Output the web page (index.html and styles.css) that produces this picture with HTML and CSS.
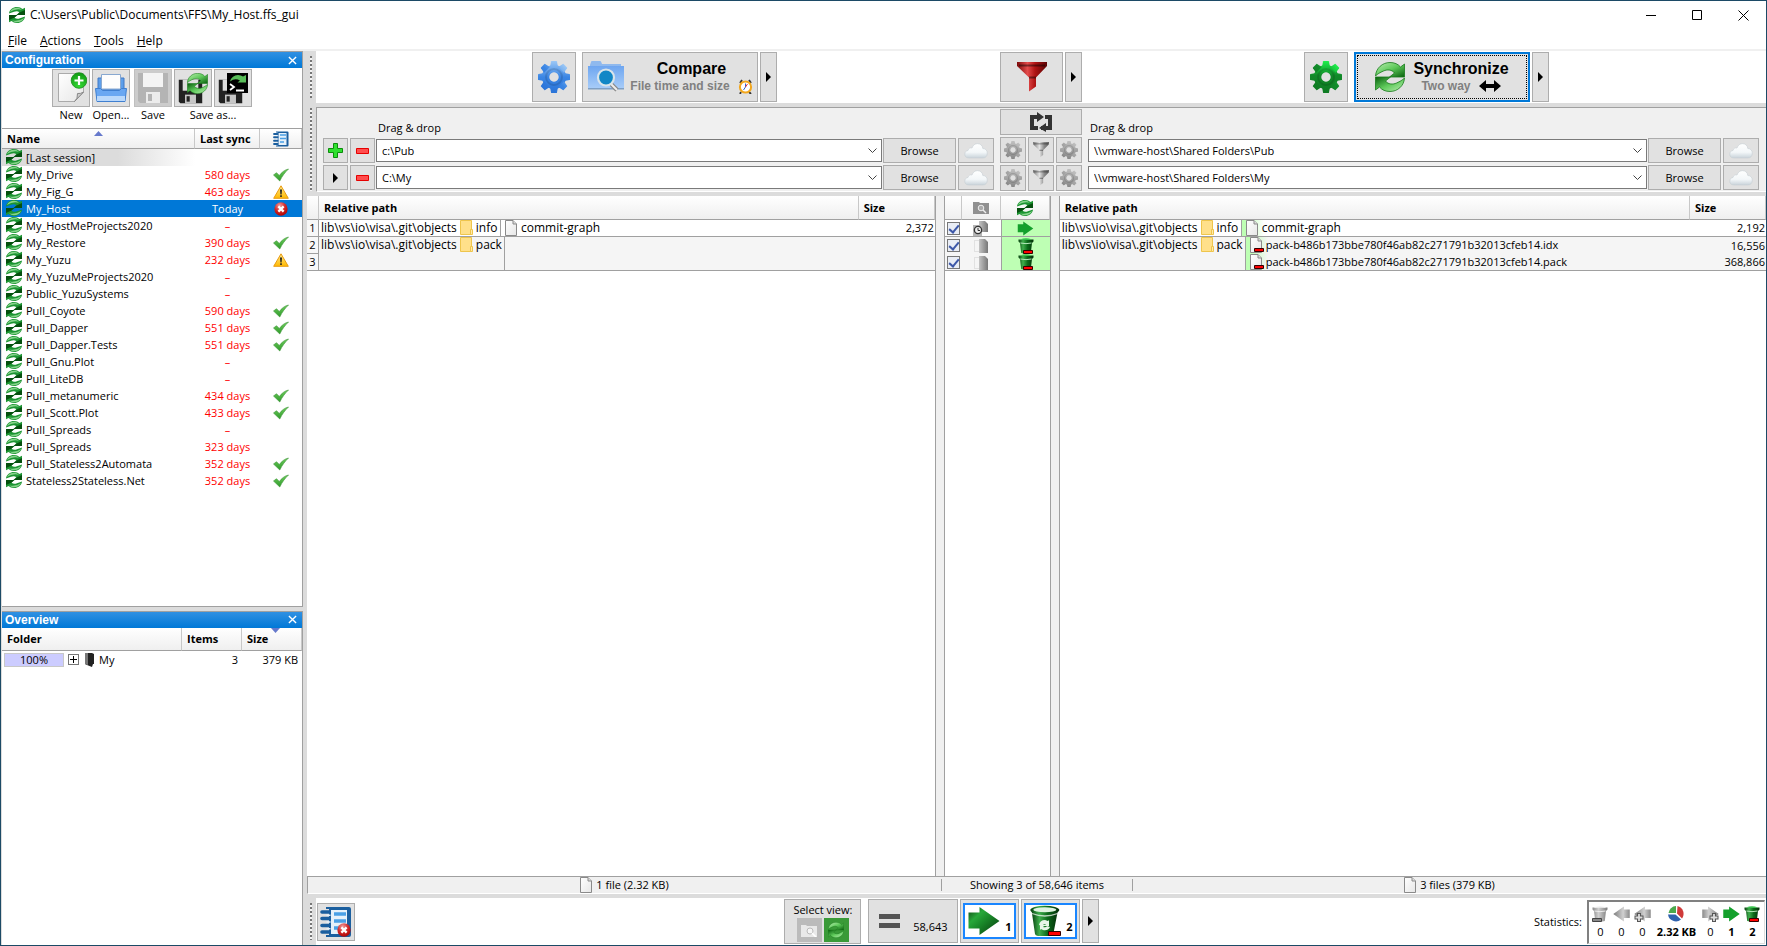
FILE: index.html
```html
<!DOCTYPE html>
<html lang="en">
<head>
<meta charset="utf-8">
<title>C:\Users\Public\Documents\FFS\My_Host.ffs_gui</title>
<link rel="stylesheet" href="styles.css">
</head>
<body>
<svg class="defs" aria-hidden="true">
  <defs>
    <linearGradient id="gGreen" gradientUnits="userSpaceOnUse" x1="0" y1="0" x2="0" y2="32"><stop offset="0" stop-color="#1ff04c"/><stop offset=".45" stop-color="#128a2a"/><stop offset="1" stop-color="#0e7a22"/></linearGradient>
    <linearGradient id="gBlue" gradientUnits="userSpaceOnUse" x1="0" y1="0" x2="0" y2="32"><stop offset="0" stop-color="#9cc8f6"/><stop offset=".5" stop-color="#3b86e4"/><stop offset="1" stop-color="#2a74d8"/></linearGradient>
    <linearGradient id="gGrey" gradientUnits="userSpaceOnUse" x1="0" y1="0" x2="0" y2="32"><stop offset="0" stop-color="#c0c0c0"/><stop offset="1" stop-color="#888"/></linearGradient>
    <linearGradient id="gSyncT" x1="0" y1="0" x2="1" y2="1"><stop offset="0" stop-color="#bdeeb4"/><stop offset=".5" stop-color="#5fca5b"/><stop offset="1" stop-color="#075f0c"/></linearGradient>
    <linearGradient id="gRow" x1="0" y1="0" x2="1" y2="1"><stop offset="0" stop-color="#5fc264"/><stop offset=".55" stop-color="#239a35"/><stop offset="1" stop-color="#03510c"/></linearGradient>
    <linearGradient id="gFolder" x1="0" y1="0" x2="0" y2="1"><stop offset="0" stop-color="#6ea6f0"/><stop offset="1" stop-color="#a9cdf9"/></linearGradient>
    <linearGradient id="gCloud" x1="0" y1="0" x2="0" y2="1"><stop offset="0" stop-color="#ffffff"/><stop offset=".6" stop-color="#f3f7f9"/><stop offset="1" stop-color="#c9d3da"/></linearGradient>
    <linearGradient id="gArrow" x1="0" y1="0" x2="1" y2="1"><stop offset="0" stop-color="#0b3d10"/><stop offset=".3" stop-color="#28a83a"/><stop offset=".5" stop-color="#1a8a2a"/><stop offset="1" stop-color="#05360b"/></linearGradient>
    <linearGradient id="gBin" x1="0" y1="0" x2="1" y2="0"><stop offset="0" stop-color="#043d0c"/><stop offset=".3" stop-color="#3fae4c"/><stop offset=".6" stop-color="#0c6a1a"/><stop offset="1" stop-color="#032e08"/></linearGradient>
    <linearGradient id="gBinGrey" x1="0" y1="0" x2="1" y2="0"><stop offset="0" stop-color="#8b8b8b"/><stop offset=".4" stop-color="#d0d0d0"/><stop offset="1" stop-color="#7b7b7b"/></linearGradient>
    <linearGradient id="gRed" x1="0" y1="0" x2="1" y2="0"><stop offset="0" stop-color="#7d0a0a"/><stop offset=".35" stop-color="#e34b4b"/><stop offset=".6" stop-color="#b01313"/><stop offset="1" stop-color="#5a0303"/></linearGradient>
    <linearGradient id="gFunnel" x1="0" y1="0" x2="1" y2="0"><stop offset="0" stop-color="#777"/><stop offset=".4" stop-color="#e4e4e4"/><stop offset=".7" stop-color="#8a8a8a"/><stop offset="1" stop-color="#666"/></linearGradient>
    <linearGradient id="gPage" x1="0" y1="0" x2="1" y2="1"><stop offset="0" stop-color="#fff"/><stop offset="1" stop-color="#e6e6e6"/></linearGradient>
    <linearGradient id="gGreyPage" x1="0" y1="0" x2="1" y2="0"><stop offset="0" stop-color="#c4c4c4"/><stop offset="1" stop-color="#777"/></linearGradient>
    <linearGradient id="gWarn" x1="0" y1="0" x2="0" y2="1"><stop offset="0" stop-color="#ffe98a"/><stop offset="1" stop-color="#ffb900"/></linearGradient>
    <linearGradient id="gCheck" x1="0" y1="0" x2="0" y2="1"><stop offset="0" stop-color="#6fce5d"/><stop offset="1" stop-color="#2f9a2a"/></linearGradient>
    <radialGradient id="gErr" cx=".4" cy=".25" r=".8"><stop offset="0" stop-color="#f3a0a0"/><stop offset=".5" stop-color="#d22a2a"/><stop offset="1" stop-color="#a00"/></radialGradient>
    <radialGradient id="gPlus" cx=".5" cy=".9" r=".9"><stop offset="0" stop-color="#35d935"/><stop offset="1" stop-color="#119a14"/></radialGradient>
  </defs>
  <symbol id="gear" viewBox="0 0 32 32">
    <path fill-rule="evenodd" d="M16 3.800a12.200 12.200 0 1 0 .01 0zM16 11.300a4.700 4.700 0 1 1-.01 0z"/>
    <g id="teeth"><path d="M12 6L13 .500q.1-.5.600-.5h4.800q.5 0 .6.500L20 6z"/><path d="M12 26L13 31.500q.1.500.6.500h4.800q.5 0 .6-.5L20 26z"/><path d="M6 12L.500 13Q0 13.100 0 13.600v4.800q0 .5.500.6L6 20z"/><path d="M26 12l5.500 1q.5.100.5.600v4.800q0 .5-.5.600L26 20z"/></g>
    <use href="#teeth" transform="rotate(45 16 16)"/>
    <circle cx="16" cy="16" r="8" fill="none" stroke="#000" stroke-opacity=".12" stroke-width="2"/>
  </symbol>
  <symbol id="sync" viewBox="0 0 30 30">
    <g id="half" stroke="#17781b" stroke-width=".8"><path d="M.500 14C1 6 7.500.500 15 .500c4.500 0 8 1.500 10.500 4.500L29.500 2v13H14.500l5-4C17 7.500 12 7.300 8.500 9 5 10.500 2.500 12 .500 14z"/></g>
    <use href="#half" transform="rotate(180 15 15)"/>
  </symbol>
  <symbol id="syncrow" viewBox="0 0 16 16">
    <g id="rhalf"><path d="M0 6.500C.500 2.500 4 0 8 0q3.500 0 5.500 2L16 .800V8H7.500l3-2.500Q8.500 3.500 5 4.800z" fill="#1c9432"/><path d="M.800 5C2.500 2 5 .800 8 .800q3 0 5 2Q7 1 .800 5z" fill="#86d48b"/><path d="M16 3v5H7.500l3-2.500z" fill="#06500f"/></g>
    <use href="#rhalf" transform="rotate(180 8 8)"/>
  </symbol>
  <symbol id="check" viewBox="0 0 16 13"><path d="M.500 6.500L3.500 4.200 6.300 7C8.500 4 11.500 1.400 15.500.500 12 3.800 9 7.800 6.800 12.500z" fill="url(#gCheck)" stroke="#3c9438" stroke-width=".6"/></symbol>
  <symbol id="warn" viewBox="0 0 16 14"><path d="M8 .800L15.300 13.300H.700z" fill="url(#gWarn)" stroke="#e89a12" stroke-linejoin="round"/><path d="M7 4.500h2L8.600 9.500H7.400zM7.200 10.300h1.600v1.600H7.200z" fill="#222"/></symbol>
  <symbol id="error" viewBox="0 0 16 16"><circle cx="8" cy="8" r="7.600" fill="url(#gErr)"/><path d="M5 5l6 6M11 5l-6 6" stroke="#fff" stroke-width="2.600"/></symbol>
  <symbol id="log" viewBox="0 0 32 32"><path d="M6 1h23q2 0 2 2v26q0 2-2 2H6V29h3V3H6z" fill="#1b5f9f"/><path d="M11 4h16v24H11z" fill="#e6f1fa"/><path d="M14 8h12M14 15h12M14 22h8" stroke="#4aa0e6" stroke-width="3.400"/><path d="M2 6h7M2 12.500h7M2 19.500h7M2 26h7" stroke="#1b5f9f" stroke-width="3.600" stroke-linecap="round"/><path d="M6.500 9.300h4M6.500 16h4M6.500 22.800h4" stroke="#e6f1fa" stroke-width="1.600"/></symbol>
  <symbol id="doc" viewBox="0 0 12 16"><path d="M.500.500h7.500l3.500 3.500v11.500H.500z" fill="url(#gPage)" stroke="#8a8a8a"/><path d="M8 .500v3.500h3.500" fill="#ddd" stroke="#8a8a8a"/></symbol>
  <symbol id="docdel" viewBox="0 0 14 16"><path d="M.500.500h7.500l3.500 3.500v11.500H.500z" fill="url(#gPage)" stroke="#8a8a8a"/><path d="M8 .500v3.500h3.500" fill="#ddd" stroke="#8a8a8a"/><path d="M4.500 11.500h9v3h-9z" fill="#f00" stroke="#300"/></symbol>
  <symbol id="folder" viewBox="0 0 13 16"><path d="M.500.500h11v14H.500z" fill="#ffe08a" stroke="#eec54c"/><path d="M10.500 9.500h2v5h-2z" fill="#ffe9a8" stroke="#eec54c"/></symbol>
  <symbol id="cloud" viewBox="0 0 24 16"><path d="M5 15C2 15 .800 13.300.800 11.300.800 8.800 2.300 7.600 4 7.500 4.500 5.500 6 4.500 8 5 9 2 11 .700 13.500.700c3 0 5 1.800 5.300 4.800 2.900 0 4.500 2 4.500 4.800 0 3-2 4.700-4.300 4.700z" fill="url(#gCloud)" stroke="#c6ced4" stroke-width=".6"/></symbol>
  <symbol id="funnel" viewBox="0 0 30 30"><path d="M0 0h30v4L19 15.500v9L12 29.500v-14L0 4z"/><path d="M2 3.500h26M19 15.500H12" stroke="#000" stroke-opacity=".45" stroke-width="1.800"/></symbol>
  <symbol id="tri" viewBox="0 0 5 10"><path d="M0 0l5 5-5 5z" fill="#000"/></symbol>
  <symbol id="arrow" viewBox="0 0 32 30"><path d="M.500 6.500h11V1L31.500 15 11.500 29v-6.500H.500z"/></symbol>
  <symbol id="bin" viewBox="0 0 32 32"><path d="M2.500 5L6 29q.2 1.500 3 2h12q3-.5 3.300-2L29 5z"/><ellipse cx="15.800" cy="5" rx="14.500" ry="4.300"/><ellipse cx="15.800" cy="4.800" rx="11.500" ry="2.500" fill="#dff3df"/><path d="M3 8.500q12.800 5 25.600 0" fill="none" stroke="#fff" stroke-opacity=".7" stroke-width="1.300"/></symbol>
  <symbol id="binsm" viewBox="0 0 16 16"><path d="M.500 1.500h15v2L14 5l-1.200 10q-4.800 1.500-9.600 0L2 5 .500 3.500z" fill="url(#gBin)"/><path d="M2.500 1.200q5.500-1.700 11 0-5.500 1.700-11 0z" fill="#36c04a"/><path d="M2.500 5q5.500 1.300 11 0" stroke="#b6eabc" fill="none"/><path d="M5.500 12.500h9v3h-9z" fill="#f00" stroke="#300"/></symbol>
  <symbol id="minus" viewBox="0 0 13 6"><path d="M.500.500h12v5H.500z" fill="#ff4d4d" stroke="#e60000"/></symbol>
  <symbol id="chev" viewBox="0 0 9 5"><path d="M.500.500l4 4 4-4" fill="none" stroke="#444"/></symbol>
  <symbol id="floppy" viewBox="0 0 32 32"><path d="M1 1h30v30H3l-2-2z"/><path d="M6 1h20v14H6z" fill="#fff" fill-opacity=".85"/><path d="M9 20h14v11H9z" fill="#fff" fill-opacity=".75"/><path d="M11 22h4v7h-4z"/></symbol>
  <symbol id="close" viewBox="0 0 10 10"><path d="M1 1l8 8M9 1L1 9" stroke="currentColor" stroke-width="1.500"/></symbol>
</svg>

<header class="titlebar">
  <svg class="i16"><use href="#syncrow"/></svg>
  <h1>C:\Users\Public\Documents\FFS\My_Host.ffs_gui</h1>
  <button class="winbtn" aria-label="Minimize"><svg width="11" height="11"><path d="M0 5.500h10" stroke="#000"/></svg></button>
  <button class="winbtn" aria-label="Maximize"><svg width="11" height="11"><path d="M.500.500h9v9h-9z" fill="none" stroke="#000"/></svg></button>
  <button class="winbtn" aria-label="Close"><svg width="11" height="11"><path d="M.500.500l10 10M10.500.500l-10 10" stroke="#000"/></svg></button>
</header>
<nav class="menu"><button><u>F</u>ile</button><button><u>A</u>ctions</button><button><u>T</u>ools</button><button><u>H</u>elp</button></nav>

<div class="work">
<aside class="side">
  <section class="pane config">
    <h2 class="caption">Configuration<button aria-label="Close configuration"><svg class="i9"><use href="#close"/></svg></button></h2>
    <div class="filebar">
      <div class="tool"><button id="bnew" class="sq"><svg width="32" height="32"><path d="M3.500 1.500h25v19l-9 9h-16z" fill="url(#gPage)" stroke="#aaa"/><path d="M28.500 20q-3 2-6 1.500Q23 27 19.500 29.500z" fill="#ccc" stroke="#888"/><circle cx="24" cy="8.500" r="7.800" fill="url(#gPlus)" stroke="#168a18" stroke-width=".8"/><path d="M24 4v9M19.500 8.500h9" stroke="#fff" stroke-width="2.200"/></svg></button><label for="bnew">New</label></div>
      <div class="tool gap"><button id="bopen" class="sq"><svg width="32" height="32"><path d="M3 6h26v12H3z" fill="#5c9eea" stroke="#4178c4"/><path d="M6.500 2.500h19V17h-19z" fill="#fdfdfd" stroke="#88a8d0"/><path d="M.500 16.500h5l2 2h17l2-2h5L30 29.500H2z" fill="#69a7f2" stroke="#3f7fd0"/><path d="M2 24h28v5H2z" fill="#b9d8fb"/></svg></button><label for="bopen">Open...</label></div>
      <div class="tool"><button id="bsave" class="sq off"><svg width="32" height="32" fill="#b4b4b4"><use href="#floppy"/></svg></button><label for="bsave">Save</label></div>
      <div class="tool"><div class="pair"><button id="bsaveas" class="sq"><svg width="32" height="32"><use href="#floppy" x="1" y="7" width="25" height="25" fill="#222"/><use href="#sync" x="10" y="1" width="21" height="21" fill="url(#gSyncT)"/></svg></button><button class="sq" aria-label="Save as batch job"><svg width="32" height="32"><use href="#floppy" x="1" y="7" width="25" height="25" fill="#222"/><path d="M10 1h21v20H10z" fill="#000"/><path d="M13 9.500Q15 3 21 3q3 0 5 1.500L29 3v7.500h-8.500L23 8.500q-5-3-10 1z" fill="#58bd58"/><path d="M13 12l4 3-4 3M19 18.500h8" stroke="#fff" stroke-width="1.800" fill="none"/></svg></button></div><label for="bsaveas">Save as...</label></div>
    </div>
    <table class="conf">
      <colgroup><col><col class="c-sync"><col class="c-log"></colgroup>
      <thead><tr><th class="sorted">Name<svg class="sort" width="9" height="5"><path d="M0 5L4.500 0 9 5z" fill="#6679cc"/></svg></th><th>Last sync</th><th class="mid"><svg class="i16" role="img" aria-label="Log"><use href="#log"/></svg></th></tr></thead>
      <tbody>
      <tr class="last"><td><svg><use href="#syncrow"/></svg>[Last session]</td><td></td><td></td></tr>
      <tr><td><svg><use href="#syncrow"/></svg>My_Drive</td><td>580 days</td><td><svg><use href="#check"/></svg></td></tr>
      <tr><td><svg><use href="#syncrow"/></svg>My_Fig_G</td><td>463 days</td><td><svg><use href="#warn"/></svg></td></tr>
      <tr class="sel"><td><svg><use href="#syncrow"/></svg>My_Host</td><td>Today</td><td><svg><use href="#error"/></svg></td></tr>
      <tr><td><svg><use href="#syncrow"/></svg>My_HostMeProjects2020</td><td>–</td><td></td></tr>
      <tr><td><svg><use href="#syncrow"/></svg>My_Restore</td><td>390 days</td><td><svg><use href="#check"/></svg></td></tr>
      <tr><td><svg><use href="#syncrow"/></svg>My_Yuzu</td><td>232 days</td><td><svg><use href="#warn"/></svg></td></tr>
      <tr><td><svg><use href="#syncrow"/></svg>My_YuzuMeProjects2020</td><td>–</td><td></td></tr>
      <tr><td><svg><use href="#syncrow"/></svg>Public_YuzuSystems</td><td>–</td><td></td></tr>
      <tr><td><svg><use href="#syncrow"/></svg>Pull_Coyote</td><td>590 days</td><td><svg><use href="#check"/></svg></td></tr>
      <tr><td><svg><use href="#syncrow"/></svg>Pull_Dapper</td><td>551 days</td><td><svg><use href="#check"/></svg></td></tr>
      <tr><td><svg><use href="#syncrow"/></svg>Pull_Dapper.Tests</td><td>551 days</td><td><svg><use href="#check"/></svg></td></tr>
      <tr><td><svg><use href="#syncrow"/></svg>Pull_Gnu.Plot</td><td>–</td><td></td></tr>
      <tr><td><svg><use href="#syncrow"/></svg>Pull_LiteDB</td><td>–</td><td></td></tr>
      <tr><td><svg><use href="#syncrow"/></svg>Pull_metanumeric</td><td>434 days</td><td><svg><use href="#check"/></svg></td></tr>
      <tr><td><svg><use href="#syncrow"/></svg>Pull_Scott.Plot</td><td>433 days</td><td><svg><use href="#check"/></svg></td></tr>
      <tr><td><svg><use href="#syncrow"/></svg>Pull_Spreads</td><td>–</td><td></td></tr>
      <tr><td><svg><use href="#syncrow"/></svg>Pull_Spreads</td><td>323 days</td><td></td></tr>
      <tr><td><svg><use href="#syncrow"/></svg>Pull_Stateless2Automata</td><td>352 days</td><td><svg><use href="#check"/></svg></td></tr>
      <tr><td><svg><use href="#syncrow"/></svg>Stateless2Stateless.Net</td><td>352 days</td><td><svg><use href="#check"/></svg></td></tr>
      </tbody>
    </table>
  </section>
  <section class="pane overview">
    <h2 class="caption">Overview<button aria-label="Close overview"><svg class="i9"><use href="#close"/></svg></button></h2>
    <table class="over">
      <colgroup><col><col class="c-items"><col class="c-size"></colgroup>
      <thead><tr><th>Folder</th><th>Items</th><th class="sorted">Size<svg class="sort" width="9" height="5"><path d="M0 0L4.500 5 9 0z" fill="#6679cc"/></svg></th></tr></thead>
      <tbody><tr><td><div class="node"><span class="pct">100%</span><button class="exp" aria-label="Expand"><svg width="9" height="9"><path d="M4.500 1v7M1 4.500h7" stroke="#000"/></svg></button><svg width="11" height="15"><path d="M1 1h7l2 1v10H9L8 15l-5-2-2-1z" fill="#222"/><path d="M1 1h3v12l-3-1z" fill="#777"/></svg><span>My</span></div></td><td>3</td><td>379 KB</td></tr></tbody>
    </table>
  </section>
</aside>

<main class="main">
  <div class="strip">
    <div class="grip"></div>
    <div class="actions">
      <div class="grp cmp">
        <button class="big gearb" aria-label="Comparison settings"><svg class="i32" fill="url(#gBlue)"><use href="#gear"/></svg></button>
        <button class="big wide"><svg width="38" height="34"><path d="M3 5l1-3q.2-1 1-1h8q1 0 1.200 1L15 4h19v4H3z" fill="#8fb9ee"/><path d="M1 6h36v23H1z" fill="url(#gFolder)"/><path d="M1 28h36v1.500H1z" fill="#7f9fc4"/><path d="M24 24l6 6" stroke="#888" stroke-width="4.500"/><path d="M24 24l6 6" stroke="#eee" stroke-width="2"/><circle cx="19" cy="17.500" r="8" fill="#1287c6" stroke="#d9e4ea" stroke-width="2.200"/></svg><span class="lbl"><b>Compare</b><small>File time and size <svg width="15" height="15"><path d="M3 13l-1 2M11 13l2 2M2 4l2-3M13 4l-2-3" stroke="#333" stroke-width="1.800"/><circle cx="7.500" cy="8" r="5.600" fill="#fff" stroke="#f2a71d" stroke-width="2"/><path d="M7.500 4.500V8L5.500 11" stroke="#36c" fill="none"/><path d="M7.500 8l2-3" stroke="#e33"/></svg></small></span></button>
        <button class="big nar" aria-label="Comparison variants"><svg class="t"><use href="#tri"/></svg></button>
      </div>
      <div class="grp flt">
        <button class="big filt" aria-label="Filter"><svg width="30" height="30" fill="url(#gRed)"><use href="#funnel"/></svg></button>
        <button class="big nar" aria-label="Filter options"><svg class="t"><use href="#tri"/></svg></button>
      </div>
      <div class="grp syn">
        <button class="big gearb" aria-label="Synchronization settings"><svg class="i32" fill="url(#gGreen)"><use href="#gear"/></svg></button>
        <button class="big wide focus"><svg width="30" height="30" fill="url(#gSyncT)"><use href="#sync"/></svg><span class="lbl"><b>Synchronize</b><small>Two way <svg width="22" height="12"><path d="M0 6l7-6v4h8V0l7 6-7 6V8H7v4z" fill="#000"/></svg></small></span></button>
        <button class="big nar" aria-label="Synchronization variants"><svg class="t"><use href="#tri"/></svg></button>
      </div>
    </div>
  </div>

  <div class="strip">
    <div class="grip"></div>
    <div class="folders">
      <div class="fcol">
        <span class="dd dleft">Drag &amp; drop</span>
        <div class="frow">
          <button class="b25" aria-label="Add folder pair"><svg width="15" height="15"><path d="M5.500.500h4v5h5v4h-5v5h-4v-5h-5v-4h5z" fill="#2fe02f" stroke="#0b8d0b"/></svg></button>
          <button class="b25" aria-label="Remove pair"><svg width="13" height="6"><use href="#minus"/></svg></button>
          <div class="combo"><input type="text" aria-label="Left folder 1" value="c:\Pub"><button aria-label="History"><svg width="9" height="5"><use href="#chev"/></svg></button></div>
          <button class="browse">Browse</button><button class="cl" aria-label="Online storage"><svg width="24" height="16"><use href="#cloud"/></svg></button>
        </div>
        <div class="frow">
          <button class="b25" aria-label="Pair menu"><svg class="t"><use href="#tri"/></svg></button>
          <button class="b25" aria-label="Remove pair"><svg width="13" height="6"><use href="#minus"/></svg></button>
          <div class="combo"><input type="text" aria-label="Left folder 2" value="C:\My"><button aria-label="History"><svg width="9" height="5"><use href="#chev"/></svg></button></div>
          <button class="browse">Browse</button><button class="cl" aria-label="Online storage"><svg width="24" height="16"><use href="#cloud"/></svg></button>
        </div>
      </div>
      <div class="mcol">
        <button class="swap" aria-label="Swap sides"><svg width="24" height="20"><path d="M12 5H3v11h6M12 16h9V5h-5" fill="none" stroke="#333" stroke-width="4"/><path d="M8 0l7 5-7 5zM17 11l-7 5 7 4z" fill="#333"/></svg></button>
        <div class="three"><button aria-label="Local comparison settings"><svg class="i18" fill="url(#gGrey)"><use href="#gear"/></svg></button><button aria-label="Local filter"><svg width="16" height="16" fill="url(#gFunnel)"><use href="#funnel"/></svg></button><button aria-label="Local sync settings"><svg class="i18" fill="url(#gGrey)"><use href="#gear"/></svg></button></div>
        <div class="three"><button aria-label="Local comparison settings"><svg class="i18" fill="url(#gGrey)"><use href="#gear"/></svg></button><button aria-label="Local filter"><svg width="16" height="16" fill="url(#gFunnel)"><use href="#funnel"/></svg></button><button aria-label="Local sync settings"><svg class="i18" fill="url(#gGrey)"><use href="#gear"/></svg></button></div>
      </div>
      <div class="fcol">
        <span class="dd">Drag &amp; drop</span>
        <div class="frow">
          <div class="combo first"><input type="text" aria-label="Right folder 1" value="\\vmware-host\Shared Folders\Pub"><button aria-label="History"><svg width="9" height="5"><use href="#chev"/></svg></button></div>
          <button class="browse">Browse</button><button class="cl" aria-label="Online storage"><svg width="24" height="16"><use href="#cloud"/></svg></button>
        </div>
        <div class="frow">
          <div class="combo first"><input type="text" aria-label="Right folder 2" value="\\vmware-host\Shared Folders\My"><button aria-label="History"><svg width="9" height="5"><use href="#chev"/></svg></button></div>
          <button class="browse">Browse</button><button class="cl" aria-label="Online storage"><svg width="24" height="16"><use href="#cloud"/></svg></button>
        </div>
      </div>
    </div>
  </div>

  <div class="grids">
    <div class="gcell">
      <table class="files">
        <colgroup><col class="c-num"><col><col class="c-lsize"></colgroup>
        <thead><tr><th></th><th>Relative path</th><th>Size</th></tr></thead>
        <tbody>
          <tr class="end"><td>1</td><td><div class="path"><span class="dir">lib\vs\io\visa\.git\objects<svg class="fo"><use href="#folder"/></svg>info</span><span class="file name"><svg class="d"><use href="#doc"/></svg>commit-graph</span></div></td><td>2,372</td></tr>
          <tr class="alt"><td>2</td><td><div class="path"><span class="dir w2">lib\vs\io\visa\.git\objects<svg class="fo"><use href="#folder"/></svg>pack</span><span class="file"></span></div></td><td></td></tr>
          <tr class="alt end"><td>3</td><td><div class="path"><span class="dir w2"></span><span class="file"></span></div></td><td></td></tr>
        </tbody>
      </table>
    </div>
    <div class="sash"></div>
    <div class="gcell">
      <table class="files acts">
        <colgroup><col class="c-cb"><col class="c-cat"><col></colgroup>
        <thead><tr><th></th><th><svg width="16" height="13"><path d="M0 1h6l1 1h9v11H0z" fill="#909090"/><circle cx="8" cy="7" r="2.800" fill="#aaa" stroke="#eee"/><path d="M10 9l3 3" stroke="#eee" stroke-width="1.400"/></svg></th><th><svg class="i16"><use href="#syncrow"/></svg></th></tr></thead>
        <tbody>
          <tr class="end"><td><input type="checkbox" checked aria-label="Include 1"></td><td><svg width="16" height="15"><path d="M6 0h6l3 3v8H6z" fill="url(#gGreyPage)"/><path d="M0 4h9v11H0z" fill="#b5b5b5"/><circle cx="5" cy="9" r="3.600" fill="#eee" stroke="#333" stroke-width="1.300"/><path d="M5 7v2.500h2" stroke="#333" fill="none"/></svg></td><td><svg width="17" height="15" fill="#14a02c"><use href="#arrow"/></svg></td></tr>
          <tr class="alt"><td><input type="checkbox" checked aria-label="Include 2"></td><td><svg width="16" height="15"><path d="M1.500 2.500h6v11h-6z" fill="none" stroke="#ccc" stroke-dasharray="1 1"/><path d="M6 1h6l3 3v11H6z" fill="url(#gGreyPage)"/></svg></td><td><svg class="i16"><use href="#binsm"/></svg></td></tr>
          <tr class="alt end"><td><input type="checkbox" checked aria-label="Include 3"></td><td><svg width="16" height="15"><path d="M1.500 2.500h6v11h-6z" fill="none" stroke="#ccc" stroke-dasharray="1 1"/><path d="M6 1h6l3 3v11H6z" fill="url(#gGreyPage)"/></svg></td><td><svg class="i16"><use href="#binsm"/></svg></td></tr>
        </tbody>
      </table>
    </div>
    <div class="sash"></div>
    <div class="gcell right">
      <table class="files nonum">
        <colgroup><col><col class="c-lsize"></colgroup>
        <thead><tr><th>Relative path</th><th>Size</th></tr></thead>
        <tbody>
          <tr class="end"><td><div class="path"><span class="dir">lib\vs\io\visa\.git\objects<svg class="fo"><use href="#folder"/></svg>info</span><span class="file name go"><svg class="d"><use href="#doc"/></svg>commit-graph</span></div></td><td>2,192</td></tr>
          <tr class="alt"><td><div class="path"><span class="dir w2">lib\vs\io\visa\.git\objects<svg class="fo"><use href="#folder"/></svg>pack</span><span class="file go"><svg class="dd2"><use href="#docdel"/></svg>pack-b486b173bbe780f46ab82c271791b32013cfeb14.idx</span></div></td><td>16,556</td></tr>
          <tr class="alt end"><td><div class="path"><span class="dir w2"></span><span class="file go"><svg class="dd2"><use href="#docdel"/></svg>pack-b486b173bbe780f46ab82c271791b32013cfeb14.pack</span></div></td><td>368,866</td></tr>
        </tbody>
      </table>
    </div>
  </div>

  <div class="status">
    <span><svg class="d"><use href="#doc"/></svg>1 file (2.32 KB)</span>
    <span class="showing">Showing 3 of 58,646 items</span>
    <span><svg class="d"><use href="#doc"/></svg>3 files (379 KB)</span>
  </div>

  <footer class="strip">
    <div class="grip"></div>
    <div class="bottom">
      <button class="sq logb" aria-label="Show log"><svg width="32" height="32"><use href="#log"/><use href="#error" x="17" y="17" width="14" height="14"/></svg></button>
      <div class="views">
        <div class="selview"><span>Select view:</span><div class="vb"><button class="vcat" aria-label="Category view"><svg width="16" height="13"><path d="M0 1h5l1 1h10v11H0z" fill="#e9e9e9"/><circle cx="9" cy="7" r="3" fill="#f5f5f5" stroke="#bbb"/><path d="M11 9l4 4" stroke="#fff" stroke-width="1.600"/></svg></button><button class="vact" aria-label="Action view"><svg class="i16" fill="url(#gSyncT)"><use href="#sync"/></svg></button></div></div>
        <button class="view eq"><svg width="21" height="14"><path d="M0 0h21v5H0zM0 9h21v5H0z" fill="#555"/></svg><span>58,643</span></button>
        <button class="view on"><span class="inner"><svg width="32" height="30" fill="url(#gArrow)"><use href="#arrow"/></svg><b>1</b></span></button>
        <button class="view on"><span class="inner"><svg width="32" height="32"><use href="#bin" fill="url(#gBin)"/><path d="M10 20q1-5 6-5l3 1 1-1v6h-5l2-2q-3 0-4 2zM21 22q-2 4-7 3l-2-1-1 1v-5h5l-2 2q3 1 4-1z" fill="#e8f6e8"/><path d="M19.500 26.500h12v4h-12z" fill="#f00" stroke="#300"/></svg><b>2</b></span></button>
        <button class="view more" aria-label="View options"><svg class="t"><use href="#tri"/></svg></button>
      </div>
      <div class="stats"><span>Statistics:</span>
        <div class="statbox">
          <div class="st"><svg width="16" height="16"><path d="M.500 1.500h15v2L14 5l-1.200 10q-4.800 1.500-9.600 0L2 5 .500 3.500z" fill="url(#gBinGrey)"/><path d="M2.500 1.500q5.500-1.500 11 0M2.500 5q5.500 1.300 11 0" stroke="#eee" fill="none"/><path d="M.500 12.500h9v3h-9z" fill="#888" stroke="#444"/></svg>0</div>
          <div class="st"><svg width="17" height="16"><use href="#arrow" fill="url(#gBinGrey)" transform="matrix(-1 0 0 1 17 0)"/></svg>0</div>
          <div class="st"><svg width="17" height="16"><use href="#arrow" fill="url(#gBinGrey)" transform="matrix(-1 0 0 1 17 0)"/><path d="M5 7v9M.500 11.500h9" stroke="#555" stroke-width="4"/><path d="M5 8v7M1.500 11.500h7" stroke="#ddd" stroke-width="1.800"/></svg>0</div>
          <div class="st wide2"><svg width="16" height="16"><path d="M8 7V0A8 8 0 0 0 .500 7z" fill="#4aa84c"/><path d="M9.500 0A8 8 0 0 1 14 12.500L9 7.500z" fill="#cf3a3a"/><path d="M0 8.500h7.500l5.500 5A8 8 0 0 1 0 8.500z" fill="#2f62ae"/></svg><b>2.32 KB</b></div>
          <div class="st"><svg width="17" height="16"><use href="#arrow" fill="url(#gBinGrey)"/><path d="M12 7v9M7.500 11.500h9" stroke="#555" stroke-width="4"/><path d="M12 8v7M8.500 11.500h7" stroke="#ddd" stroke-width="1.800"/></svg>0</div>
          <div class="st"><svg width="17" height="16" fill="#14a02c"><use href="#arrow"/></svg><b>1</b></div>
          <div class="st"><svg class="i16"><use href="#binsm"/></svg><b>2</b></div>
        </div>
      </div>
    </div>
  </footer>
</main>
</div>
</body>
</html>
```
FILE: styles.css
```css
* { box-sizing: border-box; }
body {
  margin: 0;
  height: 100vh;
  display: flex;
  flex-direction: column;
  border: 1px solid #1c4a66;
  background: #fff;
  color: #000;
  font: 11px/16px "Open Sans", "Noto Sans", sans-serif;
  overflow: hidden;
}
svg { display: block; flex: none; }
button, input { font: inherit; color: inherit; padding: 0; margin: 0; }
button { display: flex; align-items: center; justify-content: center; border: 1px solid #adadad; background: #e1e1e1; }
table { border-collapse: separate; border-spacing: 0; table-layout: fixed; width: 100%; }
th, td { padding: 0; text-align: left; white-space: nowrap; }
.defs { position: absolute; width: 0; height: 0; }
.i9 { width: 9px; height: 9px; }
.i16 { width: 16px; height: 16px; }
.i18 { width: 18px; height: 18px; }
.i32 { width: 32px; height: 32px; }
.t { width: 5px; height: 10px; }

/* title bar and menu */
.titlebar { display: flex; align-items: center; height: 28px; padding-left: 8px; }
.titlebar h1 { flex: 1; margin: 0 0 0 5px; font-size: 12px; font-weight: 400; }
.winbtn { width: 46px; height: 28px; border: 0; background: none; }
.menu { display: flex; gap: 13px; height: 22px; padding: 4px 7px 0; border-bottom: 2px solid #f0f0f0; }
.menu button { display: block; height: 16px; border: 0; background: none; font-size: 12px; }

.work { flex: 1; display: flex; min-height: 0; background: #dcdcdc; }

/* left side */
.side { width: 302px; padding-left: 1px; display: flex; flex-direction: column; gap: 4px; }
.pane { background: #fff; border: solid #a0a0a0; border-width: 1px 1px 1px 0; }
.config { flex: 555; }
.overview { flex: 334; border-bottom: 0; }
.caption {
  display: flex; align-items: center; justify-content: space-between;
  margin: 0; height: 16px; padding: 0 5px 0 3px;
  background: linear-gradient(#3090e2, #0078d7);
  color: #fff; font: bold 12px/16px "Liberation Sans", sans-serif;
}
.caption button { border: 0; background: none; }
.filebar { display: flex; justify-content: center; gap: 2px; height: 61px; padding-top: 1px; border-bottom: 1px solid #a0a0a0; }
.tool { display: flex; flex-direction: column; align-items: center; width: 38px; white-space: nowrap; }
.tool:last-child { width: 78px; }
.gap { margin-right: 2px; }
.pair { display: flex; gap: 2px; }
.sq { width: 38px; height: 38px; }
.sq.off { background: #ccc; border-color: #bfbfbf; }
th { font-weight: 700; background: linear-gradient(#fff, #efefef); border-bottom: 1px solid #a0a0a0; border-right: 1px solid #c8c8c8; padding-left: 5px; }
.conf th { height: 20px; }
.sorted { position: relative; }
.sort { position: absolute; top: 2px; left: 50%; }
.conf .sort { margin-left: -4px; }
.c-sync { width: 65px; }
.c-log { width: 42px; }
.conf td { height: 17px; line-height: 17px; }
.conf td:first-child { padding-left: 24px; position: relative; }
.conf td:first-child svg { position: absolute; left: 4px; top: 0; width: 16px; height: 16px; }
.conf td:nth-child(2) { color: #f00; text-align: center; }
.conf td:nth-child(3) svg { width: 16px; height: 14px; margin: 0 auto; }
.conf .mid svg { margin-left: 8px; }
.conf .last td:first-child { background: linear-gradient(90deg, #dcdcdc 60%, #fff); }
.conf .sel td { background: #0078d7; color: #fff; }
.over th { height: 23px; }
.over .sort { top: 0; margin-left: -1px; }
.c-items { width: 60px; }
.c-size { width: 60px; }
.over td { height: 18px; text-align: right; padding-right: 4px; }
.node { display: flex; align-items: center; }
.pct { width: 60px; height: 14px; margin: 0 4px 0 2px; border: 1px solid #c8c8c8; background: #ccf; line-height: 12px; text-align: center; }
.exp { width: 11px; height: 11px; margin-right: 5px; background: #fff; border-color: #777; }
.node span:last-child { margin-left: 4px; }

/* main column */
.main { flex: 1; min-width: 0; margin-left: 4px; display: flex; flex-direction: column; }
.strip { display: flex; }
.grip { width: 9px; padding: 5px 0; }
.grip::before { content: ""; display: block; width: 2px; height: 100%; margin-left: 3px; background: repeating-linear-gradient(#777 0 2px, #f4f4f4 2px 4px); }
.actions { flex: 1; display: grid; grid-template-columns: 1fr auto 1fr; background: #fff; padding: 1px 0; }
.grp { display: flex; justify-content: center; gap: 2px; }
.cmp { padding-right: 7px; }
.syn { padding-left: 5px; }
.big { height: 50px; }
.gearb { width: 44px; margin-right: 4px; }
.wide { width: 176px; gap: 5px; }
.nar { width: 17px; }
.filt { width: 63px; }
.lbl { display: flex; flex-direction: column; align-items: center; font-family: "Liberation Sans", sans-serif; white-space: nowrap; }
.lbl b { font-size: 16px; line-height: 18px; }
.lbl small { display: flex; align-items: center; gap: 8px; font-size: 12px; font-weight: 700; line-height: 16px; color: #808080; }
.focus { position: relative; border: 2px solid #0078d7; gap: 8px; }
.focus::after { content: ""; position: absolute; inset: 1px; border: 1px dotted #000; }
.folders {
  flex: 1; display: grid; grid-template-columns: 1fr 82px 1fr; column-gap: 6px;
  margin: 4px 0; padding: 1px 7px 0 6px;
  background: #f0f0f0; border: solid #a0a0a0; border-width: 1px 0 0 1px; border-bottom: 1px solid #fff;
}
.fcol, .mcol { display: flex; flex-direction: column; gap: 2px; }
.dd { height: 27px; padding: 11px 0 0 2px; }
.dleft { padding-left: 55px; }
.frow { display: flex; align-items: center; gap: 2px; }
.b25 { width: 25px; height: 25px; }
.combo { flex: 1; display: flex; height: 23px; margin: 0 -1px; border: 1px solid #7a7a7a; background: #fff; }
.combo.first { margin-left: 0; }
.combo input { flex: 1; min-width: 0; padding-left: 5px; border: 0; outline: 0; background: none; }
.combo button { width: 17px; border: 0; background: none; }
.browse { width: 73px; height: 25px; }
.cl { width: 36px; height: 25px; }
.swap { height: 26px; }
.three { display: grid; grid-template-columns: repeat(3, 1fr); gap: 2px; }
.three button { height: 26px; }

/* file grids */
.grids { flex: 1; min-height: 0; display: grid; grid-template-columns: 8fr 8px 107px 8px 9fr; background: #fff; }
.gcell { border-right: 1px solid #a0a0a0; min-width: 0; }
.right { border-right: 0; border-left: 1px solid #a0a0a0; }
.sash { background: #f0f0f0; }
.sash + .gcell:not(.right) { border-left: 1px solid #a0a0a0; }
.files th { height: 24px; }
.files td { height: 17px; line-height: 16px; }
.files .alt td { background: #f5f5f5; }
.files .end td { border-bottom: 1px solid #a0a0a0; }
.files td:last-child { text-align: right; padding-right: 1px; }
.c-num { width: 12px; }
.c-lsize { width: 76px; }
.files:not(.nonum):not(.acts) td:first-child { border-right: 1px solid #a0a0a0; border-bottom: 1px solid #a0a0a0; text-align: center; background: #f8f8f8; }
.path { display: flex; height: 16px; }
.alt:not(.end) .path { height: 17px; }
.dir { display: flex; width: 182px; padding-left: 2px; border-right: 1px solid #a0a0a0; }
.dir, .name { font-size: 12px; }
.dir.w2 { width: 186px; }
.fo { width: 13px; height: 16px; margin: 0 3px; }
.file { flex: 1; display: flex; padding-left: 4px; }
.d { width: 12px; height: 16px; margin-right: 4px; }
.dd2 { width: 14px; height: 16px; margin-right: 2px; }
.go { background: linear-gradient(90deg, #beffb4 4px, transparent 22px); }
.c-cb { width: 17px; }
.c-cat { width: 39px; }
.acts th { padding-left: 0; }
.acts svg { margin: 0 auto; }
.files.acts td:last-child { background: #beffb4; border-left: 1px solid #a0a0a0; padding-right: 0; }
.acts input {
  appearance: none; display: block; width: 13px; height: 13px; margin: 0 0 0 2px;
  border: 1px solid #777; background: #e9edf5;
}
.acts input:checked::after { content: ""; display: block; width: 4px; height: 8px; margin: 0 0 0 3px; border: solid #3d58a8; border-width: 0 2px 2px 0; transform: rotate(40deg); }

/* status line */
.status { display: grid; grid-template-columns: 1fr 192px 1fr; height: 18px; background: #f0f0f0; border: solid #a0a0a0; border-width: 1px 0 0 1px; border-bottom: 1px solid #fff; }
.status span { display: flex; justify-content: center; }
.status .showing { margin: 2px 0; line-height: 12px; border: solid #a0a0a0; border-width: 0 1px; }

/* bottom bar */
footer { margin-top: 4px; height: 47px; }
.bottom { flex: 1; display: flex; justify-content: space-between; align-items: center; background: #fff; padding: 0 1px; }
.views { display: flex; gap: 2px; height: 45px; margin-right: 5px; }
.selview { width: 77px; margin-right: 5px; border: 1px solid #adadad; background: #e1e1e1; text-align: center; padding-top: 2px; }
.vb { display: flex; justify-content: center; gap: 2px; }
.vb button { width: 25px; height: 24px; border-color: #bbb; background: #bbb; }
.vb .vact { background: #3a9a38; border-color: #3a9a38; }
.view { height: 44px; }
.eq { width: 90px; gap: 13px; }
.eq span { padding-top: 12px; }
.on { width: 59px; padding: 2px; }
.inner { display: flex; flex: 1; height: 36px; align-items: center; justify-content: center; gap: 5px; border: 2px solid #1a86ff; background: #fff; }
.inner b { padding-top: 12px; }
.more { width: 17px; }
.stats { display: flex; align-items: center; gap: 5px; }
.statbox { display: flex; height: 44px; padding: 4px 1px 0; border: solid #808080; border-width: 2px 1px 1px 2px; border-right-color: #ddd; border-bottom-color: #ddd; }
.st { width: 21px; display: flex; flex-direction: column; align-items: center; gap: 2px; }
.wide2 { width: 47px; }
```
